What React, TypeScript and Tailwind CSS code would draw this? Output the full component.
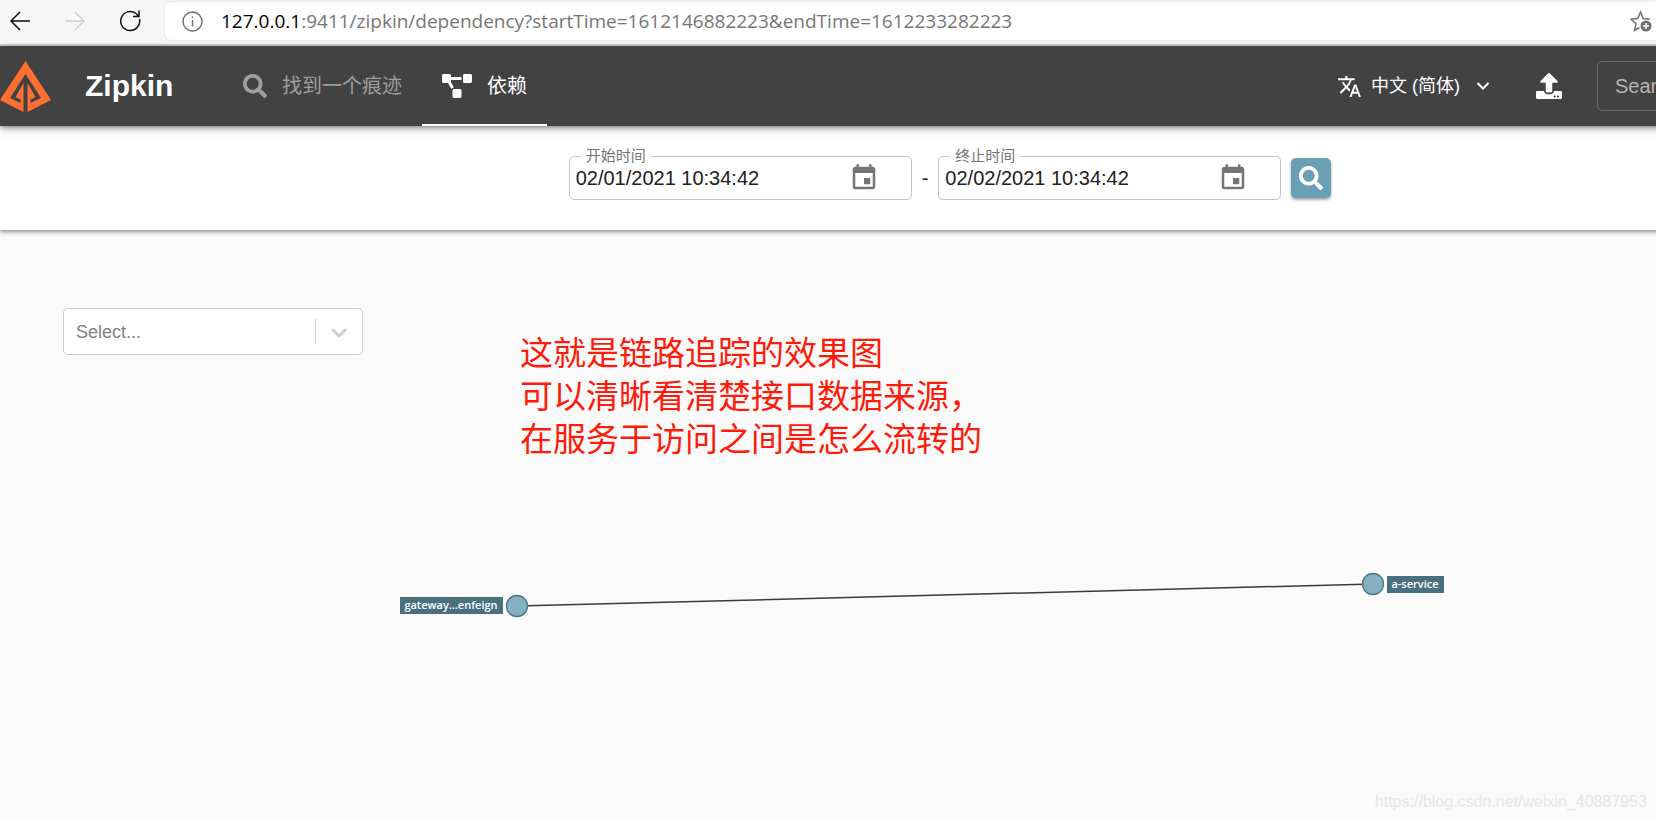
import { useState } from "react";
import { FaProjectDiagram, FaSearch, FaUpload } from "react-icons/fa";
import { MdEvent, MdTranslate } from "react-icons/md";

const URL_HOST = "127.0.0.1";
const URL_PATH = ":9411/zipkin/dependency?startTime=1612146882223&endTime=1612233282223";

const ZipkinLogo = () => (
  <svg viewBox="0 0 51 51" className="h-[51px] w-[51px] shrink-0" fill="#ff6f33" aria-hidden="true">
    <path d="M25.500 0 51 39 27.500 51V22L35.500 36 30.500 38.500V42L41 37 25.500 13 10 37 20.500 42V38.500L15.500 36 23.500 22V51L0 39Z" />
  </svg>
);

const AddressBar = () => (
  <div className="flex h-[46px] shrink-0 items-start border-b-2 border-[#cecece] bg-[#f7f7f7] pt-[2px]">
    <nav className="flex h-[38px] w-[165px] shrink-0 items-center gap-[33px] pl-[9px]" aria-label="Browser">
      <button type="button" aria-label="Back">
        <svg viewBox="0 0 22 22" className="size-[22px]" fill="none" stroke="#111" strokeWidth="1.5">
          <path d="M21 11H2M11 2l-9 9 9 9" />
        </svg>
      </button>
      <button type="button" aria-label="Forward" disabled>
        <svg viewBox="0 0 22 22" className="size-[22px]" fill="none" stroke="#cfcfcf" strokeWidth="1.5">
          <path d="M1 11h19M11 2l9 9-9 9" />
        </svg>
      </button>
      <button type="button" aria-label="Reload">
        <svg viewBox="0 0 22 22" className="size-[22px]" fill="none" stroke="#111" strokeWidth="1.5">
          <path d="M20.5 9A9.5 9.5 0 1 1 17 3.5L20 6.500M20 .5v6h-6" />
        </svg>
      </button>
    </nav>
    <div className="flex h-[38px] flex-1 items-center rounded-l-md bg-white pr-1 pl-[17px] shadow-[0_0_3px_rgba(0,0,0,0.12)]">
      <svg viewBox="0 0 21 21" className="size-[21px] shrink-0" fill="none" stroke="#6e6e6e" strokeWidth="1.4">
        <circle cx="10.5" cy="10.5" r="9.5" />
        <path d="M10.5 9v6.500M10.5 5.500v1.800" />
      </svg>
      <p className="ml-[18px] flex-1 font-['Open_Sans',sans-serif] text-[19px] leading-6 whitespace-nowrap text-[#767676]">
        <span className="text-black">{URL_HOST}</span>
        {URL_PATH}
      </p>
      <button type="button" aria-label="Add to favorites">
        <svg viewBox="0 0 22 22" className="size-[22px]" fill="none" stroke="#6e6e6e" strokeWidth="1.5">
          <path d="M9.500 17.500 4.500 20.500 6 13.800 1 9.200 7.800 8.500 10.500 2 13.200 8.500 20 9.200" />
          <circle cx="16" cy="16" r="5.5" fill="#6e6e6e" stroke="none" />
          <path d="M16 13v6M13 16h6" stroke="#fff" />
        </svg>
      </button>
    </div>
  </div>
);

const Header = () => (
  <header className="relative z-20 flex h-20 items-center bg-[#424242] pr-6 text-white shadow-[0_2px_5px_rgba(0,0,0,0.4),0_4px_12px_rgba(0,0,0,0.12)]">
    <ZipkinLogo />
    <h1 className="ml-[34px] w-[138px] text-[30px] leading-9 font-bold">Zipkin</h1>
    <nav className="flex h-full">
      <a href="#traces" className="flex items-center gap-[15px] px-5 text-xl text-[#9e9e9e]">
        <FaSearch size={24} />
        找到一个痕迹
      </a>
      <a href="#dependency" className="flex items-center gap-[15px] border-y-2 border-t-transparent border-b-white px-5 text-xl">
        <FaProjectDiagram size={30} className="h-6" />
        依赖
      </a>
    </nav>
    <button type="button" className="ml-auto flex items-center text-lg">
      <MdTranslate size={25} />
      <span className="ml-[9px]">中文 (简体)</span>
      <svg viewBox="0 0 14 10" className="ml-4 h-[10px] w-[14px]" fill="none" stroke="currentColor" strokeWidth="2">
        <path d="M1.500 2 7 7.500 12.500 2" />
      </svg>
    </button>
    <button type="button" aria-label="Upload JSON" className="ml-[46px]">
      <FaUpload size={26} />
    </button>
    <input
      aria-label="Search by trace ID"
      placeholder="Search by trace ID"
      className="ml-[35px] h-[50px] w-[279px] rounded-[5px] border border-[#6b6b6b] px-[17px] text-xl placeholder:text-[#b5b5b5]"
    />
  </header>
);

interface DateFieldProps {
  id: string;
  label: string;
  initial: string;
}

const DateField = ({ id, label, initial }: DateFieldProps) => {
  const [value, setValue] = useState(initial);

  return (
    <div className="relative flex h-11 w-[343px] items-center rounded-[5px] border border-[#c4c4c4]">
      <label htmlFor={id} className="absolute -top-3 left-[11px] bg-white px-[5px] text-[15px] leading-[22px] text-[#757575]">
        {label}
      </label>
      <input
        id={id}
        value={value}
        onChange={(e) => setValue(e.target.value)}
        className="h-6 w-[279px] pl-[6px] text-xl text-[#212121] outline-none"
      />
      <button type="button" aria-label={label} className="text-[#757575]">
        <MdEvent size={30} />
      </button>
    </div>
  );
};

const SearchBar = () => (
  <form
    className="relative z-10 flex h-[104px] items-center justify-center gap-[10px] bg-white shadow-[0_1px_5px_rgba(0,0,0,0.6)]"
    onSubmit={(e) => e.preventDefault()}
  >
    <DateField id="start-time" label="开始时间" initial="02/01/2021 10:34:42" />
    <span className="text-xl text-[#212121]">-</span>
    <DateField id="end-time" label="终止时间" initial="02/02/2021 10:34:42" />
    <button
      type="submit"
      aria-label="Search"
      className="flex size-10 items-center justify-center rounded-[5px] bg-[#6a9fb5] text-white shadow-[0_2px_3px_rgba(0,0,0,0.35)]"
    >
      <FaSearch size={24} />
    </button>
  </form>
);

const ServiceSelect = () => (
  <div className="flex h-[47px] w-[300px] shrink-0 items-center rounded-[5px] border border-[#ccc] bg-white">
    <select aria-label="Service" className="h-full flex-1 appearance-none pl-3 text-lg text-[#808080] outline-none">
      <option>Select...</option>
    </select>
    <span className="h-[25px] w-px bg-[#ccc]" />
    <svg viewBox="0 0 20 20" className="mx-[13px] size-5" fill="none" stroke="#ccc" strokeWidth="3" strokeLinecap="round">
      <path d="M4 8l6 6 6-6" />
    </svg>
  </div>
);

const DependencyGraph = () => (
  <svg
    viewBox="0 0 1100 60"
    className="mt-[109px] ml-[390px] h-[60px] w-[1100px] font-['Open_Sans',sans-serif] text-[11px] font-semibold"
    role="img"
    aria-label="Dependencies"
  >
    <path d="M127 36 983 14" stroke="#3a3a3a" strokeWidth="1.5" />
    <g stroke="#4a7486" strokeWidth="1.3" fill="#85b0c4">
      <circle cx="127" cy="36" r="10.5" />
      <circle cx="983" cy="14" r="10.5" />
    </g>
    <rect x="10" y="27" width="103" height="17" fill="#4a7080" />
    <rect x="997" y="6" width="57" height="17" fill="#4a7080" />
    <text x="61" y="39" textAnchor="middle" fill="#fff">gateway...enfeign</text>
    <text x="1025" y="18" textAnchor="middle" fill="#fff">a-service</text>
  </svg>
);

export default function App() {
  return (
    <div className="relative flex min-h-screen flex-col overflow-hidden bg-[#fafafa] font-['Liberation_Sans','Noto_Sans_CJK_SC',sans-serif]">
      <AddressBar />
      {/* the page keeps its own width and runs off the right edge of narrower windows */}
      <div className="min-w-[1900px] flex-1">
        <Header />
        <SearchBar />
        <main className="pt-[78px]">
          <div className="flex items-start pl-[63px]">
            <ServiceSelect />
            <p className="mt-6 ml-[157px] text-[33px] leading-[43px] text-[#ff1a0a]">
              这就是链路追踪的效果图
              <br />
              可以清晰看清楚接口数据来源，
              <br />
              在服务于访问之间是怎么流转的
            </p>
          </div>
          <DependencyGraph />
        </main>
      </div>
      <p className="absolute right-[9px] bottom-[6px] text-base text-[#e6e6e6]">https://blog.csdn.net/weixin_40887953</p>
    </div>
  );
}
